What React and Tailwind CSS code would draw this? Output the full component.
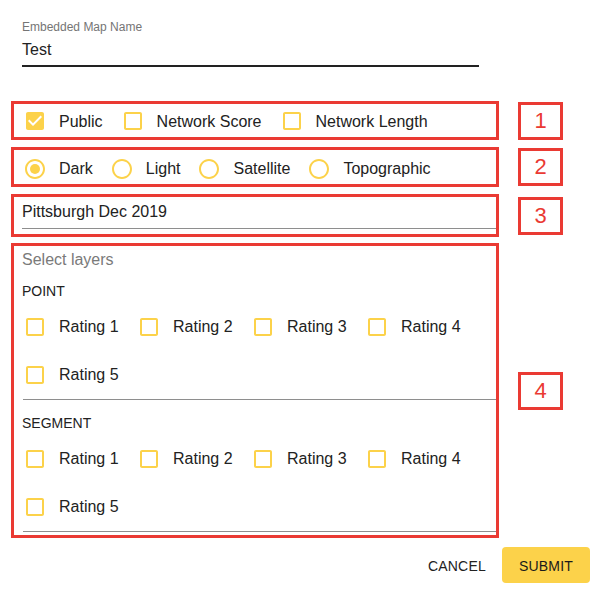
import React, { useState } from 'react';

const YELLOW = '#fcd24a';

function CheckIcon({ checked }) {
  return (
    <svg width="24" height="24" viewBox="0 0 24 24" className="shrink-0">
      {checked ? (
        <path
          fill={YELLOW}
          d="M19 3H5c-1.11 0-2 .9-2 2v14c0 1.1.89 2 2 2h14c1.11 0 2-.9 2-2V5c0-1.1-.89-2-2-2zm-9 14l-5-5 1.41-1.41L10 14.17l7.59-7.59L19 8l-9 9z"
        />
      ) : (
        <path
          fill={YELLOW}
          d="M19 5v14H5V5h14m0-2H5c-1.1 0-2 .9-2 2v14c0 1.1.9 2 2 2h14c1.1 0 2-.9 2-2V5c0-1.1-.9-2-2-2z"
        />
      )}
    </svg>
  );
}

function RadioIcon({ checked }) {
  return (
    <svg width="24" height="24" viewBox="0 0 24 24" className="shrink-0">
      <path
        fill={YELLOW}
        d="M12 2C6.48 2 2 6.48 2 12s4.48 10 10 10 10-4.48 10-10S17.52 2 12 2zm0 18c-4.42 0-8-3.58-8-8s3.58-8 8-8 8 3.58 8 8-3.58 8-8 8z"
      />
      {checked && <circle cx="12" cy="12" r="5" fill={YELLOW} />}
    </svg>
  );
}

function CheckItem({ label, checked, onClick }) {
  return (
    <button onClick={onClick} className="flex items-center gap-[12px] text-[16px] leading-[19px] text-[#222]">
      <CheckIcon checked={checked} />
      <span>{label}</span>
    </button>
  );
}

function RadioItem({ label, checked, onClick }) {
  return (
    <button onClick={onClick} className="flex items-center gap-[12px] text-[16px] leading-[19px] text-[#222]">
      <RadioIcon checked={checked} />
      <span>{label}</span>
    </button>
  );
}

function NumberBox({ n }) {
  return (
    <div className="w-[45px] h-[38px] border-[3px] border-[#ea3a33] flex items-center justify-center text-[22px] leading-none text-[#ea3a33] shrink-0">
      {n}
    </div>
  );
}

function LayerGroup({ title, selected, toggle, first }) {
  const ratings = [1, 2, 3, 4, 5];
  return (
    <div className={first ? 'mt-[13.5px]' : 'mt-[15px]'}>
      <div className="pl-[8px] text-[14px] leading-[16px] text-[#222]">{title}</div>
      <div className="mt-[4px] pl-[8px]">
        <div className="flex flex-wrap ml-[1px] border-b border-[#8e8e8e]">
          {ratings.map((r) => (
            <div key={r} className="w-[114px] h-[48px] flex items-center">
              <CheckItem
                label={`Rating ${r}`}
                checked={selected.includes(r)}
                onClick={() => toggle(r)}
              />
            </div>
          ))}
        </div>
      </div>
    </div>
  );
}

export default function App() {
  const [flags, setFlags] = useState({ public: true, score: false, length: false });
  const [style, setStyle] = useState('Dark');
  const [points, setPoints] = useState([]);
  const [segments, setSegments] = useState([]);

  const toggleIn = (setter) => (r) =>
    setter((prev) => (prev.includes(r) ? prev.filter((x) => x !== r) : [...prev, r]));

  return (
    <div className="w-[597px] h-[599px] bg-white font-['Liberation_Sans',Arial,sans-serif] overflow-hidden">
      {/* Map name field */}
      <div className="pt-[20px] pl-[22px]">
        <div className="w-[457px]">
          <div className="text-[12px] leading-[14px] text-[#757575]">Embedded Map Name</div>
          <div className="mt-[6px] pb-[6px] border-b-2 border-[#222] text-[16px] leading-[19px] text-[#222]">
            Test
          </div>
        </div>
      </div>

      <div className="mt-[34px] pl-[11px] flex flex-col">
        {/* 1 */}
        <div className="flex items-center gap-[19px]">
          <div className="w-[488px] h-[39px] border-[3px] border-[#ea3a33] flex items-center pl-[9px] pt-[1px] gap-[18px]">
            <CheckItem label="Public" checked={flags.public} onClick={() => setFlags({ ...flags, public: !flags.public })} />
            <CheckItem label="Network Score" checked={flags.score} onClick={() => setFlags({ ...flags, score: !flags.score })} />
            <CheckItem label="Network Length" checked={flags.length} onClick={() => setFlags({ ...flags, length: !flags.length })} />
          </div>
          <NumberBox n={1} />
        </div>

        {/* 2 */}
        <div className="mt-[7px] flex items-center gap-[19px]">
          <div className="w-[488px] h-[40px] border-[3px] border-[#ea3a33] flex items-center pl-[9px] pt-[3px] gap-[17px]">
            {['Dark', 'Light', 'Satellite', 'Topographic'].map((s) => (
              <RadioItem key={s} label={s} checked={style === s} onClick={() => setStyle(s)} />
            ))}
          </div>
          <NumberBox n={2} />
        </div>

        {/* 3 */}
        <div className="mt-[7px] flex items-center gap-[19px]">
          <div className="w-[488px] h-[43px] border-[3px] border-[#ea3a33] pl-[8px]">
            <div className="pt-[5px] pb-[7px] border-b border-[#8e8e8e] text-[16px] leading-[19px] text-[#222]">
              Pittsburgh Dec 2019
            </div>
          </div>
          <NumberBox n={3} />
        </div>

        {/* 4 */}
        <div className="mt-[6px] flex items-center gap-[19px]">
          <div className="w-[488px] h-[295px] border-[3px] border-[#ea3a33] pt-[4px]">
            <div className="pl-[8px] text-[16px] leading-[19px] text-[#7a7a7a]">Select layers</div>
            <LayerGroup title="POINT" selected={points} toggle={toggleIn(setPoints)} first />
            <LayerGroup title="SEGMENT" selected={segments} toggle={toggleIn(setSegments)} />
          </div>
          <NumberBox n={4} />
        </div>
      </div>

      {/* Actions */}
      <div className="mt-[9px] flex justify-end items-center pr-[7px]">
        <button className="mr-[8px] px-[8px] h-[36px] pt-[2px] text-[14px] uppercase tracking-[0.2px] text-[#222]">
          Cancel
        </button>
        <button className="h-[36px] px-[17px] pt-[2px] rounded-[4px] bg-[#fcd24a] text-[14px] uppercase tracking-[0.2px] text-[#1a1a1a]">
          Submit
        </button>
      </div>
    </div>
  );
}
